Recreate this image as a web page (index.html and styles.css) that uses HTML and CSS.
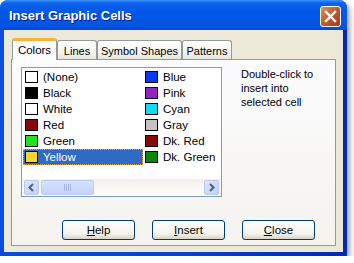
FILE: index.html
```html
<!DOCTYPE html>
<html lang="en">
<head>
    <meta charset="UTF-8">
    <title>Insert Graphic Cells</title>
    <link rel="stylesheet" href="styles.css">
</head>
<body>
    <div class="window">
        <div class="titlebar">
            <span class="title">Insert Graphic Cells</span>
            <span class="close-btn">
                <svg width="13" height="13" viewBox="0 0 13 13">
                    <path d="M2 2 L11 11 M11 2 L2 11" stroke="#fff" stroke-width="2.4" stroke-linecap="square"/>
                </svg>
            </span>
        </div>
        <div class="client">
            <div class="tabs">
                <div class="tab active">Colors</div>
                <div class="tab tab-lines">Lines</div>
                <div class="tab tab-shapes">Symbol Shapes</div>
                <div class="tab tab-patterns">Patterns</div>
            </div>
            <div class="panel">
                <div class="panel-top">
                    <div class="listbox">
                        <div class="list">
                            <div class="item"><span class="swatch" style="background:#ffffff"></span>(None)</div>
                            <div class="item"><span class="swatch" style="background:#000000"></span>Black</div>
                            <div class="item"><span class="swatch" style="background:#ffffff"></span>White</div>
                            <div class="item"><span class="swatch" style="background:#870a0a"></span>Red</div>
                            <div class="item"><span class="swatch" style="background:#1ee31e"></span>Green</div>
                            <div class="item selected"><span class="swatch" style="background:#ffd42a"></span>Yellow</div>
                            <div class="item"><span class="swatch" style="background:#0a37f0"></span>Blue</div>
                            <div class="item"><span class="swatch" style="background:#9223c3"></span>Pink</div>
                            <div class="item"><span class="swatch" style="background:#14daf2"></span>Cyan</div>
                            <div class="item"><span class="swatch" style="background:#c3c3c3"></span>Gray</div>
                            <div class="item"><span class="swatch" style="background:#870a0a"></span>Dk. Red</div>
                            <div class="item"><span class="swatch" style="background:#0a870a"></span>Dk. Green</div>
                        </div>
                        <div class="hscroll">
                            <span class="sb-btn">
                                <svg width="7" height="9" viewBox="0 0 7 9"><path d="M5 1 L1.5 4.5 L5 8" fill="none" stroke="#4d6185" stroke-width="2"/></svg>
                            </span>
                            <span class="sb-thumb">
                                <svg width="8" height="7" viewBox="0 0 8 7"><path d="M0.5 0 V7 M2.5 0 V7 M4.5 0 V7 M6.5 0 V7" stroke="#a8b8e8" stroke-width="1"/></svg>
                            </span>
                            <span class="sb-track"></span>
                            <span class="sb-btn">
                                <svg width="7" height="9" viewBox="0 0 7 9"><path d="M2 1 L5.5 4.5 L2 8" fill="none" stroke="#4d6185" stroke-width="2"/></svg>
                            </span>
                        </div>
                    </div>
                    <p class="hint">Double-click to insert into selected cell</p>
                </div>
                <div class="buttons">
                    <button><u>H</u>elp</button>
                    <button><u>I</u>nsert</button>
                    <button><u>C</u>lose</button>
                </div>
            </div>
        </div>
    </div>
</body>
</html>
```

FILE: styles.css
```css
body {
    margin: 0;
    background-color: #ffffff;
    font-family: 'Liberation Sans', Arial, sans-serif;
    font-size: 11px;
    color: #000;
}
.window {
    width: 347px;
    height: 256px;
    display: flex;
    flex-direction: column;
    background: linear-gradient(90deg, #0a4be0, #0842d6 50%, #0029b8);
    border-radius: 8px 8px 0 0;
    box-shadow: 3px 3px 5px rgba(0, 0, 0, 0.35);
    box-sizing: border-box;
    padding: 0 4px 4px 4px;
}
.titlebar {
    height: 30px;
    margin: 0 -4px;
    padding: 0 6px 0 9px;
    display: flex;
    align-items: center;
    justify-content: space-between;
    border-radius: 8px 8px 0 0;
    background: linear-gradient(#3f94ff 0, #0a62ea 3px, #0357e8 40%, #0454e2 85%, #0349d4 100%);
}
.title {
    color: #fff;
    font-weight: bold;
    font-size: 13px;
    text-shadow: 1px 1px 0 #0a1e80;
    margin-top: 1px;
}
.close-btn {
    width: 19px;
    height: 19px;
    display: flex;
    align-items: center;
    justify-content: center;
    border: 1px solid #ffffff;
    border-radius: 3px;
    background: linear-gradient(135deg, #d8906a, #c05a2e 50%, #a03a1c);
    margin-top: 2px;
}
.client {
    flex: 1;
    background-color: #ece9d8;
    padding: 8px 7px 6px 7px;
    display: flex;
    flex-direction: column;
}
.tabs {
    display: flex;
    align-items: flex-end;
    margin-bottom: -1px;
    padding-left: 1px;
    height: 22px;
}
.tab {
    box-sizing: border-box;
    height: 19px;
    margin-bottom: 1px;
    border: 1px solid #919b9c;
    border-bottom: none;
    border-radius: 3px 3px 0 0;
    background: linear-gradient(#ffffff, #f3f2ec 70%, #e6e4dc);
    display: flex;
    align-items: center;
    justify-content: center;
    padding-top: 1px;
}
.tab.active {
    width: 45px;
    height: 22px;
    margin-bottom: 0;
    border-top: 3px solid #f5b33a;
    background: #fcfcfe;
    position: relative;
    z-index: 1;
    padding-top: 0;
    padding-bottom: 2px;
    font-size: 11.5px;
}
.tab-lines {
    width: 40px;
}
.tab-shapes {
    width: 85px;
}
.tab-patterns {
    width: 50px;
}
.panel {
    flex: 1;
    border: 1px solid #919b9c;
    background: linear-gradient(#fcfcfe, #f4f3ee);
    padding: 7px 20px 5px 9px;
    display: flex;
    flex-direction: column;
}
.panel-top {
    display: flex;
    gap: 19px;
}
.listbox {
    width: 201px;
    height: 130px;
    box-sizing: border-box;
    border: 1px solid #7f9db9;
    background-color: #fff;
    display: flex;
    flex-direction: column;
    justify-content: space-between;
}
.list {
    display: grid;
    grid-auto-flow: column;
    grid-template-rows: repeat(6, 16px);
    grid-template-columns: 120px 78px;
    padding: 1px 0 0 1px;
}
.item {
    display: flex;
    align-items: center;
    padding-left: 2px;
    gap: 5px;
    white-space: nowrap;
    font-size: 11.5px;
}
.item.selected {
    background-color: #316ac5;
    color: #fff;
    outline: 1px dotted #d8a040;
    outline-offset: -1px;
}
.swatch {
    width: 13px;
    height: 12px;
    box-sizing: border-box;
    border: 1px solid #000;
    flex: none;
}
.hscroll {
    height: 17px;
    display: flex;
    align-items: center;
    padding: 0 2px;
    background: linear-gradient(#f3f1ec, #fefefb);
}
.sb-btn {
    width: 15px;
    height: 15px;
    box-sizing: border-box;
    border: 1px solid #b9cbf3;
    border-radius: 2px;
    background: linear-gradient(135deg, #dce6fd, #c0d0f6);
    display: flex;
    align-items: center;
    justify-content: center;
}
.sb-thumb {
    width: 53px;
    height: 15px;
    margin-left: 2px;
    box-sizing: border-box;
    border: 1px solid #b9cbf3;
    border-radius: 2px;
    background: linear-gradient(#d6e2fd, #c3d3f8);
    display: flex;
    align-items: center;
    justify-content: center;
}
.sb-track {
    flex: 1;
}
.hint {
    margin: 0;
    font-size: 11px;
    line-height: 14px;
    width: 92px;
}
.buttons {
    margin-top: auto;
    display: flex;
    justify-content: flex-end;
    gap: 17px;
}
.buttons button {
    width: 73px;
    height: 20px;
    border: 1px solid #003c74;
    border-radius: 3px;
    background: linear-gradient(#ffffff, #f4f3ee 70%, #d8d3c8);
    font-family: 'Liberation Sans', Arial, sans-serif;
    font-size: 11.5px;
    color: #000;
    padding: 0;
}
```
